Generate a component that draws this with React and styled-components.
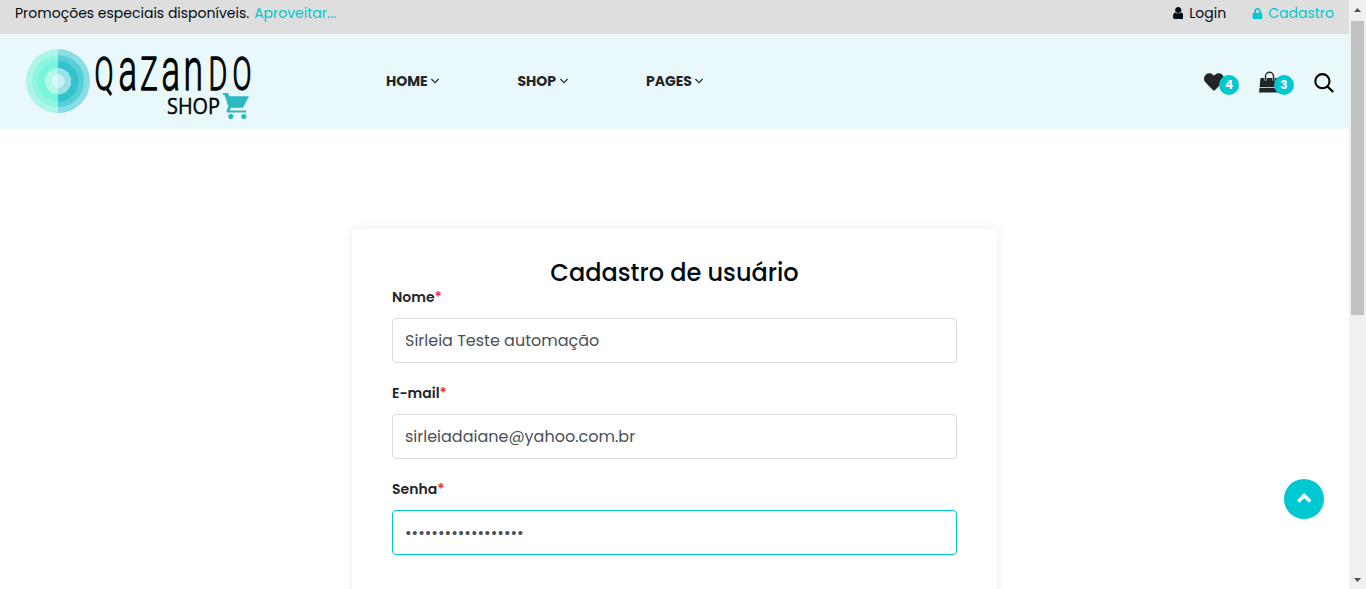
import React from 'react';
import styled, { createGlobalStyle } from 'styled-components';
import { FaHeart, FaLock } from 'react-icons/fa';

const teal = '#00c8d0';
const ice = '#e8f8fb';

const GlobalStyle = createGlobalStyle`
  *, *::before, *::after { box-sizing: border-box; }
  body {
    margin: 0;
    overflow: hidden;
    background: #fff;
    color: #212529;
    font-family: Poppins, Inter, "Open Sans", sans-serif;
    font-feature-settings: "cv11" 1;
  }
  svg { display: block; flex: none; }
`;

const Window = styled.div`
  display: flex;
  height: 589px;
  overflow: hidden;
`;

const Page = styled.div`
  flex: 1;
  min-width: 0;
`;

const TopBar = styled.div`
  display: flex;
  justify-content: space-between;
  align-items: flex-start;
  height: 34px;
  padding: 0 15px;
  background: #dedede;
  color: #000b14;
  font-size: 14px;
  line-height: 26px;
`;

const Promo = styled.div`
  display: flex;
  gap: 5px;
`;

const PromoLink = styled.a`
  color: ${teal};
`;

const Account = styled.div`
  display: flex;
  gap: 26px;
`;

const AccountLink = styled.a`
  display: flex;
  align-items: center;
  gap: ${(p) => (p.$active ? 5 : 6)}px;
  color: ${(p) => (p.$active ? teal : '#000b14')};
`;

const Header = styled.header`
  display: flex;
  align-items: center;
  height: 95px;
  padding: 0 15px 0 20px;
  background: ${ice};
`;

const Nav = styled.nav`
  display: flex;
  align-items: center;
  flex: 1;
  margin: 0 0 2px 126px;
`;

const NavItem = styled.a`
  display: flex;
  align-items: center;
  gap: 3.5px;
  width: ${(p) => p.$width}px;
  color: #212529;
  font-size: 14px;
  font-weight: 700;
  line-height: 20px;
`;

const Tools = styled.div`
  display: flex;
  align-items: center;
`;

const Tool = styled.div`
  position: relative;
  display: flex;
  align-items: center;
  width: ${(p) => p.$width}px;
  height: 30px;
  color: #212529;
`;

const Badge = styled.span`
  position: absolute;
  left: 15px;
  top: 8px;
  width: 20px;
  height: 20px;
  border-radius: 50%;
  background: ${teal};
  color: #fff;
  font-size: 12px;
  font-weight: 700;
  line-height: 20px;
  text-align: center;
`;

const Card = styled.form`
  width: 645px;
  height: 460px;
  margin: 100px 0 0 352px;
  padding: 29px 40px;
  background: #fff;
  box-shadow: 0 0 10px rgba(0, 0, 0, 0.08);
`;

const Title = styled.h3`
  margin: 0;
  color: #000b14;
  font-size: 24px;
  font-weight: 500;
  line-height: 29px;
  text-align: center;
`;

const Field = styled.label`
  display: block;
  margin-bottom: 20px;
`;

const FieldName = styled.span`
  display: block;
  height: 31px;
  font-size: 14px;
  font-weight: 600;
  line-height: 21px;
`;

const Required = styled.span`
  color: #dc3545;
`;

const Input = styled.input`
  display: block;
  width: 565px;
  height: 45px;
  padding: 6px 12px;
  border: 1px solid ${(p) => (p.$focused ? teal : '#d9dbdc')};
  border-radius: 4px;
  outline: none;
  background: #fff;
  color: #495057;
  font: inherit;
  font-size: 16px;
`;

const ToTop = styled.button`
  position: absolute;
  left: 1284px;
  top: 479px;
  display: flex;
  align-items: center;
  justify-content: center;
  width: 40px;
  height: 40px;
  padding: 0 0 2px;
  border: 0;
  border-radius: 50%;
  background: ${teal};
  color: #fff;
`;

const ScrollTrack = styled.div`
  display: flex;
  flex-direction: column;
  align-items: center;
  width: 17px;
  padding: 8px 0 7px;
  background: #f0f0f0;
`;

const ScrollThumb = styled.div`
  width: 13px;
  height: 294px;
  margin: 9px 0 auto;
  background: #c1c1c1;
`;

const UserIcon = () => (
  <svg width="10.500" height="12" viewBox="0 128 1280 1536" preserveAspectRatio="none" fill="currentColor">
    <path d="M1280 1399q0 109-62.500 187t-150.500 78h-854q-88 0-150.500-78t-62.500-187q0-85 8.500-160.500t31.500-152 58.500-131 94-89 134.500-34.500q131 128 313 128t313-128q76 0 134.500 34.500t94 89 58.500 131 31.500 152 8.500 160.500zm-256-887q0 159-112.500 271.500t-271.500 112.500-271.500-112.500-112.500-271.500 112.500-271.500 271.500-112.500 271.500 112.500 112.500 271.500z" />
  </svg>
);

const AngleDown = () => (
  <svg width="8" height="6" viewBox="0 0 8 6" fill="none" stroke="currentColor" strokeWidth="1.1">
    <path d="M0.400 1 4 4.600 7.600 1" />
  </svg>
);

const ChevronUp = () => (
  <svg width="15" height="10" viewBox="0 0 15 10" fill="none" stroke="currentColor" strokeWidth="3.600">
    <path d="M1.200 8.500 7.200 2.500l6 6" />
  </svg>
);

const BagIcon = () => (
  <svg width="20" height="22" viewBox="0 0 20 22">
    <path d="M1.500 7h17l1 9.300H.6z" fill="#212529" />
    <path d="M.5 17h19.200l.3 4.500H0z" fill="#212529" />
    <path d="M6.500 9.500V5.200a4 4 0 0 1 8 0v4.300" fill="none" stroke={ice} strokeWidth="2.400" />
    <path d="M6.500 9.500V5.200a4 4 0 0 1 8 0v4.300" fill="none" stroke="#212529" strokeWidth="1.400" />
  </svg>
);

const SearchIcon = () => (
  <svg width="20" height="23" viewBox="0 0 20 23" fill="none" stroke="#000" strokeWidth="2.100">
    <circle cx="8.400" cy="11.200" r="7.100" />
    <path d="m13.500 16.500 5.700 5.500" strokeWidth="2.300" />
  </svg>
);

/* Letter, left edge, font size, set width */
const wordmark = [
  ['Q', 74.500, 46, 19],
  ['a', 98.500, 60, 18.500],
  ['Z', 120.200, 46, 17.500],
  ['a', 141.500, 60, 18.500],
  ['n', 163.500, 60, 19.500],
  ['D', 188.500, 46, 18.800],
  ['O', 212.500, 46, 19],
];

const Logo = () => (
  <svg width="240" height="84" viewBox="0 0 240 84">
    <g transform="translate(0 -0.300)">
      <circle cx="38" cy="41.500" r="32" fill="#abf6e9" />
      <circle cx="38" cy="41.500" r="26" fill="#8ff5df" />
      <circle cx="38" cy="41.500" r="20.500" fill="#79f5dc" />
      <path d="M38 9.500a32 32 0 0 1 0 64z" fill="#8bdde4" />
      <path d="M38 15.500a26 26 0 0 1 0 52z" fill="#55ced5" />
      <path d="M38 21a20.500 20.500 0 0 1 0 41z" fill="#34c2cc" />
      <circle cx="38" cy="41.500" r="13" fill="#b5f7e9" />
      <path d="M38 28.500a13 13 0 0 1 0 26z" fill="#99e3e8" />
      <circle cx="38" cy="41.500" r="6.500" fill="#d6faf4" />
      <path d="M38 35a6.500 6.500 0 0 1 0 13z" fill="#c6f0f1" />
    </g>
    <text y="50" fill="#000" stroke="#000" strokeWidth="1.300" strokeLinejoin="round" fontFamily="Roboto, sans-serif" fontWeight="300">
      {wordmark.map(([letter, x, size, width], i) => (
        <tspan key={i} x={x} fontSize={size} textLength={width} lengthAdjust="spacingAndGlyphs">
          {letter}
        </tspan>
      ))}
    </text>
    <text x="147" y="74.200" stroke="#000" strokeWidth="0.400" fontFamily="'Open Sans', sans-serif" fontSize="21.500" textLength="53" lengthAdjust="spacingAndGlyphs">
      SHOP
    </text>
    <path d="M203 53h5l1.500 3.200H229l-6 11.500h-12l-1.500 2.800H226v2h-18.500c-1.300-.8-1-2.300-.4-3.200l1.400-2.600L204.500 55H203z" fill="#2ab8c2" />
    <circle cx="210.800" cy="76.500" r="2.500" fill="#2ab8c2" />
    <circle cx="223.800" cy="76.500" r="2.500" fill="#2ab8c2" />
  </svg>
);

const Arrow = ({ down }) => (
  <svg width="7" height="4" viewBox="0 0 7 4" fill="#505050">
    <path d={down ? 'M0 0h7L3.500 4z' : 'M0 4h7L3.500 0z'} />
  </svg>
);

const FormField = ({ name, ...input }) => (
  <Field>
    <FieldName>
      {name}
      <Required>*</Required>
    </FieldName>
    <Input {...input} />
  </Field>
);

export default function App() {
  return (
    <>
      <GlobalStyle />
      <Window>
        <Page>
          <TopBar>
            <Promo>
              <span>Promoções especiais disponíveis.</span>
              <PromoLink>Aproveitar...</PromoLink>
            </Promo>
            <Account>
              <AccountLink>
                <UserIcon />
                Login
              </AccountLink>
              <AccountLink $active>
                <FaLock size={11} />
                Cadastro
              </AccountLink>
            </Account>
          </TopBar>
          <Header>
            <Logo />
            <Nav>
              <NavItem $width={131.500}>HOME<AngleDown /></NavItem>
              <NavItem $width={128.500}>SHOP<AngleDown /></NavItem>
              <NavItem $width={60}>PAGES<AngleDown /></NavItem>
            </Nav>
            <Tools>
              <Tool $width={55}><FaHeart size={20} /><Badge>4</Badge></Tool>
              <Tool $width={55}><BagIcon /><Badge>3</Badge></Tool>
              <Tool $width={20}><SearchIcon /></Tool>
            </Tools>
          </Header>
          <Card>
            <Title>Cadastro de usuário</Title>
            <FormField name="Nome" type="text" defaultValue="Sirleia Teste automação" />
            <FormField name="E-mail" type="text" defaultValue="sirleiadaiane@yahoo.com.br" />
            <FormField name="Senha" type="password" defaultValue="automacao123456789" $focused />
          </Card>
          <ToTop aria-label="Voltar ao topo"><ChevronUp /></ToTop>
        </Page>
        <ScrollTrack>
          <Arrow />
          <ScrollThumb />
          <Arrow down />
        </ScrollTrack>
      </Window>
    </>
  );
}
